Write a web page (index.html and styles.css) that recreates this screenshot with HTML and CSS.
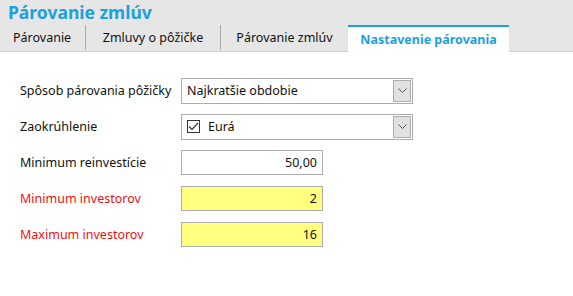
FILE: index.html
```html
<!DOCTYPE html>
<html>
<head>
  <meta charset="utf-8">
  <title>Párovanie zmlúv</title>
  <link rel="stylesheet" href="styles.css">
</head>
<body>
  <div class="header">
    <h1>Párovanie zmlúv</h1>
    <div class="tabs">
      <div class="tab tab-first">Párovanie</div>
      <div class="tab tab-loans">Zmluvy o pôžičke</div>
      <div class="tab tab-pairs">Párovanie zmlúv</div>
      <div class="tab active">Nastavenie párovania</div>
    </div>
  </div>

  <form class="settings">
    <div class="row">
      <label>Spôsob párovania pôžičky</label>
      <div class="combo">
        <span class="combo-text">Najkratšie obdobie</span>
        <span class="combo-btn"><svg width="9" height="5" viewBox="0 0 9 5"><path d="M0.5 0.5 L4.5 4.5 L8.5 0.5" fill="none" stroke="#555" stroke-width="1"/></svg></span>
      </div>
    </div>

    <div class="row">
      <label>Zaokrúhlenie</label>
      <div class="combo">
        <span class="combo-text">
          <span class="check"><svg width="11" height="9" viewBox="0 0 11 9"><path d="M1 4.5 L4 7.5 L10 1" fill="none" stroke="#333" stroke-width="1.2"/></svg></span>
          Eurá
        </span>
        <span class="combo-btn"><svg width="9" height="5" viewBox="0 0 9 5"><path d="M0.5 0.5 L4.5 4.5 L8.5 0.5" fill="none" stroke="#555" stroke-width="1"/></svg></span>
      </div>
    </div>

    <div class="row">
      <label>Minimum reinvestície</label>
      <div class="field">50,00</div>
    </div>

    <div class="row">
      <label class="required">Minimum investorov</label>
      <div class="field required-field">2</div>
    </div>

    <div class="row">
      <label class="required">Maximum investorov</label>
      <div class="field required-field">16</div>
    </div>
  </form>
</body>
</html>
```

FILE: styles.css
```css
body {
  margin: 0;
  font-family: "Noto Sans", sans-serif;
  font-size: 12.5px;
  color: #111;
  background: #fff;
}
.header {
  background-color: #e6e6e6;
  border-bottom: 1px solid #d2d2d2;
}
h1 {
  margin: 0;
  padding: 0 8px;
  height: 25px;
  line-height: 24px;
  font-size: 17.5px;
  font-weight: bold;
  color: #1ba1e2;
}
.tabs {
  display: flex;
  height: 26px;
}
.tab {
  box-sizing: border-box;
  line-height: 26px;
  text-align: center;
  white-space: nowrap;
  border-right: 1px solid #a8a8a8;
  margin-bottom: 1px;
}
.tab-first {
  width: 86px;
  padding-left: 13px;
  text-align: left;
}
.tab-loans {
  width: 135px;
}
.tab-pairs {
  width: 127px;
  border-right: none;
}
.tab.active {
  width: 161px;
  margin-bottom: -1px;
  line-height: 25px;
  background: #fff;
  border-top: 2px solid #1ba1e2;
  border-right: none;
  color: #1ba1e2;
  font-weight: bold;
}
.settings {
  padding: 26px 0 0 20px;
}
.row {
  display: flex;
  align-items: center;
  height: 25px;
  margin-bottom: 11px;
}
label {
  width: 161px;
}
label.required {
  color: #ee1111;
}
.combo {
  display: flex;
  align-items: center;
  justify-content: space-between;
  width: 230px;
  height: 24px;
  border: 1px solid #acacac;
  background: #fff;
}
.combo-text {
  display: flex;
  align-items: center;
  padding-left: 5px;
}
.combo-btn {
  display: flex;
  align-items: center;
  justify-content: center;
  width: 16px;
  height: 20px;
  margin-right: 1px;
  background: #e1e1e1;
  border: 1px solid #adadad;
}
.check {
  display: flex;
  align-items: center;
  justify-content: center;
  width: 11px;
  height: 11px;
  border: 1px solid #333;
  margin-right: 8px;
  background: #fff;
}
.field {
  width: 135px;
  height: 23px;
  line-height: 23px;
  padding-right: 5px;
  text-align: right;
  border: 1px solid #acacac;
  background: #fff;
}
.required-field {
  background: #ffff80;
}
```
